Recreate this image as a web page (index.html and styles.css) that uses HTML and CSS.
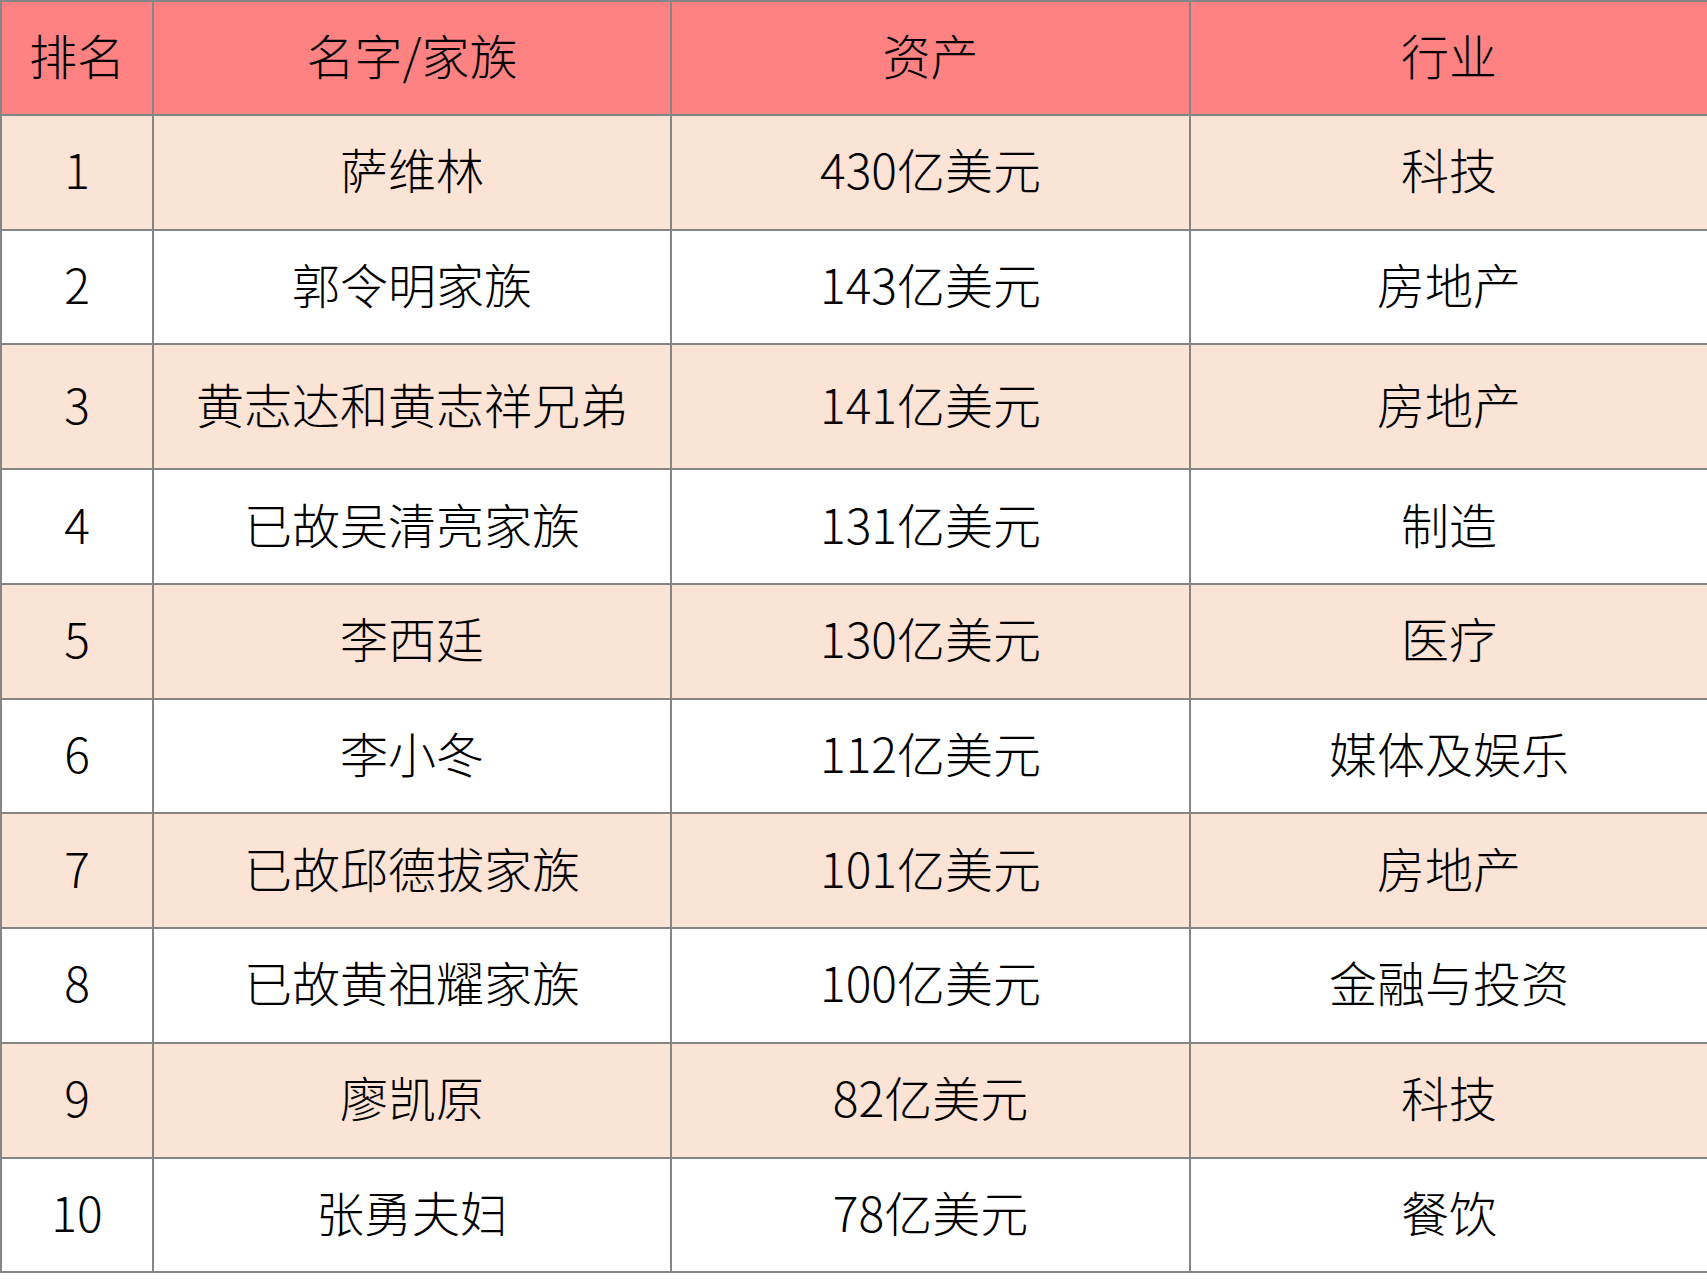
FILE: index.html
```html
<!DOCTYPE html>
<html lang="zh-CN">
<head>
<meta charset="utf-8">
<title>富豪榜</title>
<link rel="stylesheet" href="styles.css">
</head>
<body>
<table class="rank">
  <colgroup>
    <col class="c-rank">
    <col class="c-name">
    <col class="c-asset">
    <col class="c-ind">
  </colgroup>
  <thead>
    <tr><th>排名</th><th>名字/家族</th><th>资产</th><th>行业</th></tr>
  </thead>
  <tbody>
    <tr class="alt"><td>1</td><td>萨维林</td><td>430亿美元</td><td>科技</td></tr>
    <tr><td>2</td><td>郭令明家族</td><td>143亿美元</td><td>房地产</td></tr>
    <tr class="alt tall"><td>3</td><td>黄志达和黄志祥兄弟</td><td>141亿美元</td><td>房地产</td></tr>
    <tr><td>4</td><td>已故吴清亮家族</td><td>131亿美元</td><td>制造</td></tr>
    <tr class="alt"><td>5</td><td>李西廷</td><td>130亿美元</td><td>医疗</td></tr>
    <tr><td>6</td><td>李小冬</td><td>112亿美元</td><td>媒体及娱乐</td></tr>
    <tr class="alt"><td>7</td><td>已故邱德拔家族</td><td>101亿美元</td><td>房地产</td></tr>
    <tr><td>8</td><td>已故黄祖耀家族</td><td>100亿美元</td><td>金融与投资</td></tr>
    <tr class="alt"><td>9</td><td>廖凯原</td><td>82亿美元</td><td>科技</td></tr>
    <tr><td>10</td><td>张勇夫妇</td><td>78亿美元</td><td>餐饮</td></tr>
  </tbody>
</table>
</body>
</html>
```
FILE: styles.css
```css
html, body {
  margin: 0;
  padding: 0;
  background: #ffffff;
}

.rank {
  width: 1707px;
  border-collapse: collapse;
  table-layout: fixed;
  font-family: "Noto Sans CJK SC", "Microsoft YaHei", sans-serif;
  font-size: 48px;
  color: #000000;
}

.c-rank { width: 152px; }
.c-name { width: 518px; }
.c-asset { width: 519px; }
.c-ind { width: 518px; }

.rank th,
.rank td {
  border: 2px solid #858585;
  text-align: center;
  vertical-align: middle;
  padding: 0 0 8px 0;
  font-weight: 300;
  line-height: 1;
}

.rank thead tr { height: 114px; }
.rank thead th { background: #ff8282; }

.rank tbody tr { height: 114.7px; }
.rank tbody tr.tall { height: 125px; }
.rank tbody tr.alt td { background: #fbe3d6; }
```
